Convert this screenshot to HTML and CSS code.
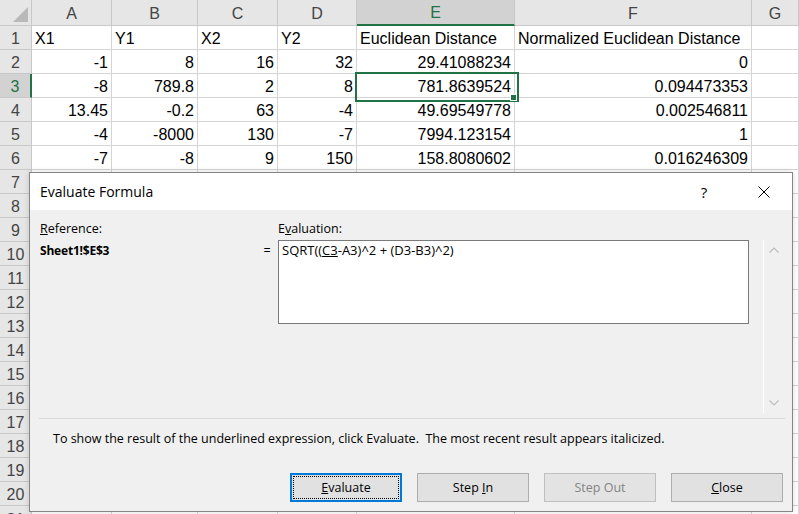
FILE: index.html
```html
<!DOCTYPE html>
<html>
<head>
<meta charset="utf-8">
<title>Evaluate Formula</title>
<link rel="stylesheet" href="styles.css">
</head>
<body>
<div class="app">
  <div class="sheet">
    <div class="corner"><svg width="15" height="15" viewBox="0 0 15 15"><polygon points="15,0 15,15 0,15" fill="#b9b9b9"/></svg></div>
    <div class="ch">A</div><div class="ch">B</div><div class="ch">C</div><div class="ch">D</div><div class="ch ch-sel">E</div><div class="ch">F</div><div class="ch">G</div>

    <div class="rh">1</div><div class="c">X1</div><div class="c">Y1</div><div class="c">X2</div><div class="c">Y2</div><div class="c">Euclidean Distance</div><div class="c">Normalized Euclidean Distance</div><div class="c"></div>
    <div class="rh">2</div><div class="n">-1</div><div class="n">8</div><div class="n">16</div><div class="n">32</div><div class="n">29.41088234</div><div class="n">0</div><div class="c"></div>
    <div class="rh rh-sel">3</div><div class="n">-8</div><div class="n">789.8</div><div class="n">2</div><div class="n">8</div><div class="n sel">781.8639524<span class="handle"></span></div><div class="n">0.094473353</div><div class="c"></div>
    <div class="rh">4</div><div class="n">13.45</div><div class="n">-0.2</div><div class="n">63</div><div class="n">-4</div><div class="n">49.69549778</div><div class="n">0.002546811</div><div class="c"></div>
    <div class="rh">5</div><div class="n">-4</div><div class="n">-8000</div><div class="n">130</div><div class="n">-7</div><div class="n">7994.123154</div><div class="n">1</div><div class="c"></div>
    <div class="rh">6</div><div class="n">-7</div><div class="n">-8</div><div class="n">9</div><div class="n">150</div><div class="n">158.8080602</div><div class="n">0.016246309</div><div class="c"></div>
    <div class="rh">7</div><div class="c"></div><div class="c"></div><div class="c"></div><div class="c"></div><div class="c"></div><div class="c"></div><div class="c"></div>
    <div class="rh">8</div><div class="c"></div><div class="c"></div><div class="c"></div><div class="c"></div><div class="c"></div><div class="c"></div><div class="c"></div>
    <div class="rh">9</div><div class="c"></div><div class="c"></div><div class="c"></div><div class="c"></div><div class="c"></div><div class="c"></div><div class="c"></div>
    <div class="rh">10</div><div class="c"></div><div class="c"></div><div class="c"></div><div class="c"></div><div class="c"></div><div class="c"></div><div class="c"></div>
    <div class="rh">11</div><div class="c"></div><div class="c"></div><div class="c"></div><div class="c"></div><div class="c"></div><div class="c"></div><div class="c"></div>
    <div class="rh">12</div><div class="c"></div><div class="c"></div><div class="c"></div><div class="c"></div><div class="c"></div><div class="c"></div><div class="c"></div>
    <div class="rh">13</div><div class="c"></div><div class="c"></div><div class="c"></div><div class="c"></div><div class="c"></div><div class="c"></div><div class="c"></div>
    <div class="rh">14</div><div class="c"></div><div class="c"></div><div class="c"></div><div class="c"></div><div class="c"></div><div class="c"></div><div class="c"></div>
    <div class="rh">15</div><div class="c"></div><div class="c"></div><div class="c"></div><div class="c"></div><div class="c"></div><div class="c"></div><div class="c"></div>
    <div class="rh">16</div><div class="c"></div><div class="c"></div><div class="c"></div><div class="c"></div><div class="c"></div><div class="c"></div><div class="c"></div>
    <div class="rh">17</div><div class="c"></div><div class="c"></div><div class="c"></div><div class="c"></div><div class="c"></div><div class="c"></div><div class="c"></div>
    <div class="rh">18</div><div class="c"></div><div class="c"></div><div class="c"></div><div class="c"></div><div class="c"></div><div class="c"></div><div class="c"></div>
    <div class="rh">19</div><div class="c"></div><div class="c"></div><div class="c"></div><div class="c"></div><div class="c"></div><div class="c"></div><div class="c"></div>
    <div class="rh">20</div><div class="c"></div><div class="c"></div><div class="c"></div><div class="c"></div><div class="c"></div><div class="c"></div><div class="c"></div>
    <div class="rh rh-last">21</div><div class="c"></div><div class="c"></div><div class="c"></div><div class="c"></div><div class="c"></div><div class="c"></div><div class="c"></div>
  </div>

  <div class="dlg">
    <div class="dlg-title">
      <span class="dlg-name">Evaluate Formula</span>
      <span class="dlg-help">?</span>
      <svg class="dlg-close" width="12" height="12" viewBox="0 0 12 12"><path d="M0.5 0.5 L11.5 11.5 M11.5 0.5 L0.5 11.5" stroke="#000" stroke-width="1" fill="none"/></svg>
    </div>
    <div class="dlg-body">
      <div class="eval-grid">
        <div class="lbl lbl-ref"><u>R</u>eference:</div>
        <div class="lbl lbl-eval">E<u>v</u>aluation:</div>
        <div class="ref-val">Sheet1!$E$3</div>
        <div class="eq">=</div>
        <div class="formula">SQRT((<u>C3</u>-A3)^2 + (D3-B3)^2)</div>
        <div class="vscroll">
          <svg width="10" height="6" viewBox="0 0 10 6"><path d="M0.5 5.5 L5 1 L9.5 5.5" stroke="#bdbdbd" stroke-width="1.2" fill="none"/></svg>
          <svg width="10" height="6" viewBox="0 0 10 6"><path d="M0.5 0.5 L5 5 L9.5 0.5" stroke="#bdbdbd" stroke-width="1.2" fill="none"/></svg>
        </div>
      </div>
      <div class="sep"></div>
      <p class="msg">To show the result of the underlined expression, click Evaluate.&nbsp; The most recent result appears italicized.</p>
      <div class="btns">
        <div class="btn btn-focus"><span class="focus-ring"><span><u>E</u>valuate</span></span></div>
        <div class="btn"><span>Step <u>I</u>n</span></div>
        <div class="btn btn-dis"><span>Step Out</span></div>
        <div class="btn"><span><u>C</u>lose</span></div>
      </div>
    </div>
  </div>
</div>
</body>
</html>
```

FILE: styles.css
```css
* { box-sizing: border-box; }
html, body { margin: 0; padding: 0; }
body { width: 799px; height: 514px; overflow: hidden; background: #fff; }
.app { position: relative; width: 799px; height: 514px; overflow: hidden; }

/* ---------- sheet ---------- */
.sheet {
  display: grid;
  grid-template-columns: 32px 80px 86px 80px 79px 158px 237px 47px;
  grid-template-rows: 26px repeat(21, 24px);
  font-family: "Liberation Sans", Arial, sans-serif;
  font-size: 16px;
  color: #000;
}
.sheet > div {
  border-right: 1px solid #d4d4d4;
  border-bottom: 1px solid #d4d4d4;
  white-space: nowrap;
  overflow: hidden;
  line-height: 23px;
  padding-top: 1px;
}
.sheet > .corner {
  background: #e6e6e6;
  border-color: #c8c8c8;
  display: flex;
  justify-content: flex-end;
  align-items: flex-end;
  padding: 0 3px 3px 0;
}
.corner svg { display: block; }
.sheet > .ch {
  background: #e6e6e6;
  border-color: #c8c8c8;
  text-align: center;
  color: #444;
  line-height: 25px;
}
.sheet > .ch-sel {
  background: #d2d2d2;
  color: #217346;
  border-bottom: 2px solid #217346;
  line-height: 24px;
}
.sheet > .rh {
  background: #e6e6e6;
  border-color: #c8c8c8;
  text-align: center;
  color: #444;
}
.sheet > .rh-last { line-height: 17px; padding-top: 5px; }
.sheet > .rh-sel {
  background: #d2d2d2;
  color: #217346;
  border-right: 2px solid #217346;
}
.sheet > .c { padding-left: 3px; }
.sheet > .n { text-align: right; padding-right: 3px; }
.sheet > .sel { position: relative; overflow: visible; }
.sel::before {
  content: "";
  position: absolute;
  left: -2px; top: -2px;
  width: 160px; height: 26px;
  border: 2px solid #217346;
}
.handle {
  position: absolute;
  left: 153px; top: 20px;
  width: 7px; height: 7px;
  background: #217346;
  border: 1px solid #fff;
}

/* ---------- dialog ---------- */
.dlg {
  position: absolute;
  left: 29px; top: 172px;
  width: 764px; height: 340px;
  border: 1px solid #858585;
  background: #f0f0f0;
  font-family: "Open Sans", "Noto Sans", sans-serif;
  color: #000;
  box-shadow: 0 0 6px rgba(0,0,0,0.15);
}
.dlg-title {
  height: 37px;
  background: #fff;
  display: flex;
  align-items: center;
  padding: 0 0 0 10px;
  font-size: 14px;
}
.dlg-name { flex: 1; }
.dlg-help { width: 20px; text-align: center; margin-right: 44px; font-size: 15px; }
.dlg-close { margin-right: 22px; display: block; }

.dlg-body {
  height: 301px;
  padding: 0 9px 0 10px;
  font-size: 12.5px;
}
.eval-grid {
  display: grid;
  grid-template-columns: 216px 22px 471px 14px 20px;
  grid-template-rows: 30px 84px 89px;
}
.lbl { padding-top: 9px; line-height: 19px; }
.lbl-ref { grid-column: 1; grid-row: 1; }
.lbl-eval { grid-column: 3; grid-row: 1; }
.ref-val { grid-column: 1; grid-row: 2; font-weight: 700; line-height: 19px; padding-top: 1px; font-size: 12px; letter-spacing: -0.2px; }
.eq { grid-column: 2; grid-row: 2; text-align: center; line-height: 19px; padding-top: 1px; }
.formula {
  grid-column: 3; grid-row: 2;
  background: #fff;
  border: 1px solid #7a7a7a;
  padding: 0 3px;
  line-height: 19px;
  font-size: 13px;
}
.vscroll {
  grid-column: 5; grid-row: 2 / 4;
  border-left: 1px solid #fff;
  display: flex;
  flex-direction: column;
  justify-content: space-between;
  align-items: center;
  padding: 7px 0 7px 0;
}
.vscroll svg { display: block; }

.sep {
  margin: 5px -2px 0 -1px;
  height: 1px;
  background: #d9d9d9;
}
.msg {
  margin: 11px 0 0 13px;
  line-height: 18px;
  white-space: nowrap;
}
.btns {
  margin-top: 25px;
  display: flex;
  justify-content: flex-end;
  gap: 15px;
}
.btn {
  width: 112px;
  height: 29px;
  background: #e1e1e1;
  border: 1px solid #adadad;
  display: flex;
  align-items: center;
  justify-content: center;
  white-space: nowrap;
}
.btn-focus {
  border: 2px solid #0078d7;
  padding: 1px;
}
.focus-ring {
  width: 100%;
  height: 100%;
  border: 1px dotted #000;
  display: flex;
  align-items: center;
  justify-content: center;
}
.btn-dis {
  color: #838383;
  border-color: #bfbfbf;
  background: #e3e3e3;
}
```
